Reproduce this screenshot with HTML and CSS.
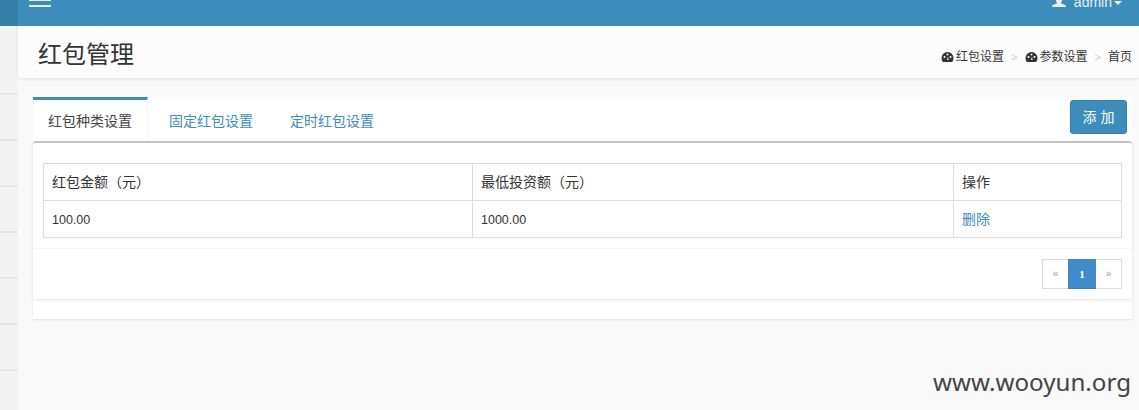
FILE: index.html
```html
<!DOCTYPE html>
<html lang="zh">
<head>
<meta charset="utf-8">
<title>红包管理</title>
<link rel="stylesheet" href="styles.css">
</head>
<body>
<aside class="sidebar">
  <div class="logo"></div>
  <div class="gap"></div>
  <div class="item"></div><div class="item"></div><div class="item"></div><div class="item"></div><div class="item"></div><div class="item"></div><div class="item"></div>
</aside>
<div class="main">
  <header class="topbar">
    <div class="burger"><i></i><i></i></div>
    <div class="user">
      <svg class="user-icon" viewBox="0 0 14 8" width="14" height="8"><path d="M4 -3h6v4l-1.200 2.200 3.900 1.600q1.300.6 1.300 2.200H0q0-1.600 1.300-2.200l3.900-1.600L4 1z" fill="#e6eff5"/></svg>
      <span class="user-name">admin</span><span class="caret"></span>
    </div>
  </header>
  <section class="page-head">
    <h1>红包管理</h1>
    <nav class="crumbs">
      <svg class="gauge" viewBox="0 0 12 10" width="13" height="10"><path d="M6 0a6 6 0 0 0-6 6c0 1.500.5 3 1.500 4h9c1-1 1.500-2.500 1.500-4a6 6 0 0 0-6-6z" fill="#333"/><circle cx="3" cy="5" r="1" fill="#fff"/><circle cx="6" cy="2.600" r="1" fill="#fff"/><circle cx="9" cy="5" r="1" fill="#fff"/><path d="M5.500 8l1-3.500 .6 3.500z" fill="#fff"/></svg>
      <span class="crumb">红包设置</span><span class="sep">&gt;</span>
      <svg class="gauge" viewBox="0 0 12 10" width="13" height="10"><path d="M6 0a6 6 0 0 0-6 6c0 1.500.5 3 1.500 4h9c1-1 1.500-2.500 1.500-4a6 6 0 0 0-6-6z" fill="#333"/><circle cx="3" cy="5" r="1" fill="#fff"/><circle cx="6" cy="2.600" r="1" fill="#fff"/><circle cx="9" cy="5" r="1" fill="#fff"/><path d="M5.500 8l1-3.500 .6 3.500z" fill="#fff"/></svg>
      <span class="crumb">参数设置</span><span class="sep">&gt;</span>
      <span class="crumb">首页</span>
    </nav>
  </section>
  <section class="content">
    <div class="tabs">
      <a class="tab active">红包种类设置</a>
      <a class="tab">固定红包设置</a>
      <a class="tab">定时红包设置</a>
      <button class="add">添 加</button>
    </div>
    <div class="box">
      <div class="box-body">
        <table>
          <tr><th class="c1">红包金额<span class="paren">（</span>元<span class="paren">）</span></th><th class="c2">最低投资额<span class="paren">（</span>元<span class="paren">）</span></th><th>操作</th></tr>
          <tr><td class="num">100.00</td><td class="num">1000.00</td><td class="act"><a class="link">删除</a></td></tr>
        </table>
      </div>
      <div class="box-foot">
        <ul class="pager">
          <li>«</li><li class="on">1</li><li>»</li>
        </ul>
      </div>
    </div>
    <div class="strip"></div>
  </section>
  <div class="mark">www.wooyun.org</div>
</div>
</body>
</html>
```

FILE: styles.css
```css
* { box-sizing: border-box; }
html, body { margin: 0; height: 100%; overflow: hidden; }
body {
  display: flex;
  width: 1139px;
  height: 410px;
  background: #f9f9f9;
  font-family: "Liberation Sans", "Noto Sans CJK SC", sans-serif;
  font-size: 14px;
  color: #333;
}
.sidebar { width: 18px; flex: none; background: #f3f3f3; }
.logo { height: 26px; background: #367fa9; }
.gap { height: 23px; }
.item { height: 46px; border-bottom: 2px solid #e6e6e6; }
.main { flex: 1; min-width: 0; display: flex; flex-direction: column; position: relative; }

.topbar {
  height: 26px;
  background: #3c8dbc;
  display: flex;
  justify-content: space-between;
  overflow: hidden;
  padding: 0 17px 0 11px;
}
.burger { width: 22px; }
.burger i { display: block; height: 2px; margin-bottom: 4px; background: #e4eef5; }
.burger i:first-child { margin-top: -1px; }
.user { display: flex; height: 8px; align-items: flex-end; color: #e6eff5; font-size: 14px; line-height: 16px; }
.user-icon { margin-right: 8px; flex: none; }
.user-name { display: block; height: 16px; margin-bottom: -2px; }
.caret {
  width: 0; height: 0; margin: 0 0 3px 2px;
  border-left: 4px solid transparent;
  border-right: 4px solid transparent;
  border-top: 4px solid #e6eff5;
}

.page-head {
  height: 52px;
  background: #fcfcfc;
  box-shadow: 0 1px 3px rgba(0,0,0,.1);
  display: flex;
  justify-content: space-between;
  padding: 0 7px 0 20px;
}
.page-head h1 { margin: 12px 0 0; font-size: 24px; line-height: 34px; font-weight: 400; color: #333; }
.crumbs { display: flex; align-items: center; height: 16px; margin-top: 23px; font-size: 12px; line-height: 16px; color: #333; }
.gauge { margin-right: 2px; flex: none; }
.sep { color: #ccc; font-size: 11px; margin: 0 7px; }

.content { padding: 19px 7px 0 15px; }
.tabs { display: flex; height: 44px; background: #fff; }
.tab { height: 44px; padding: 14px 16px 0 21px; font-size: 14px; line-height: 20px; color: #3c8dbc; }
.tab.active { color: #444; border-top: 3px solid #3c8dbc; border-right: 1px solid #f4f4f4; padding: 11px 15px 0; width: 115px; }
.add {
  margin: 3px 5px 0 auto;
  width: 57px; height: 34px;
  padding: 0 0 2px;
  background: #3c8dbc;
  border: 1px solid #367fa9;
  border-radius: 3px;
  color: #fff;
  font: 14px "Liberation Sans", "Noto Sans CJK SC", sans-serif;
}

.box { position: relative; height: 158px; background: #fff; border-top: 2px solid #c4c4c4; border-radius: 3px; box-shadow: 0 1px 3px rgba(0,0,0,.12); }
.box-body { padding: 20px 10px 10px; height: 106px; border-bottom: 1px solid #f4f4f4; }
table { width: 100%; border-collapse: collapse; table-layout: fixed; font-size: 14px; }
th, td { border: 1px solid #ddd; height: 37px; padding: 0 8px; text-align: left; font-weight: 400; color: #333; }
th { padding-bottom: 2px; }
.c1 { width: 429px; }
.c2 { width: 481px; }
.paren { font-family: "Noto Sans CJK TC", sans-serif; }
.num { font-size: 12.500px; padding-top: 2px; }
.act { padding-bottom: 2px; }
.link { color: #3c8dbc; }
.box-foot { display: flex; justify-content: flex-end; padding: 10px 10px 0; }
.pager { list-style: none; margin: 0; padding: 0; display: flex; height: 30px; border: 1px solid #ddd; }
.pager li { width: 26px; height: 28px; font-size: 10px; line-height: 28px; text-align: center; color: #999; }
.pager li:first-child { width: 25px; }
.pager li:last-child { width: 25px; }
.pager li.on { width: 28px; height: 30px; margin-top: -1px; line-height: 30px; background: #428bca; border-bottom: 1px solid #3c80bb; color: #fff; font-family: "Liberation Serif", serif; font-size: 11px; font-weight: 700; }
.strip { height: 20px; background: #fff; box-shadow: 0 1px 2px rgba(0,0,0,.1); }

.mark { position: absolute; right: 8px; top: 367px; font: 24.150px/30px "Noto Sans", sans-serif; color: #444; }
```
